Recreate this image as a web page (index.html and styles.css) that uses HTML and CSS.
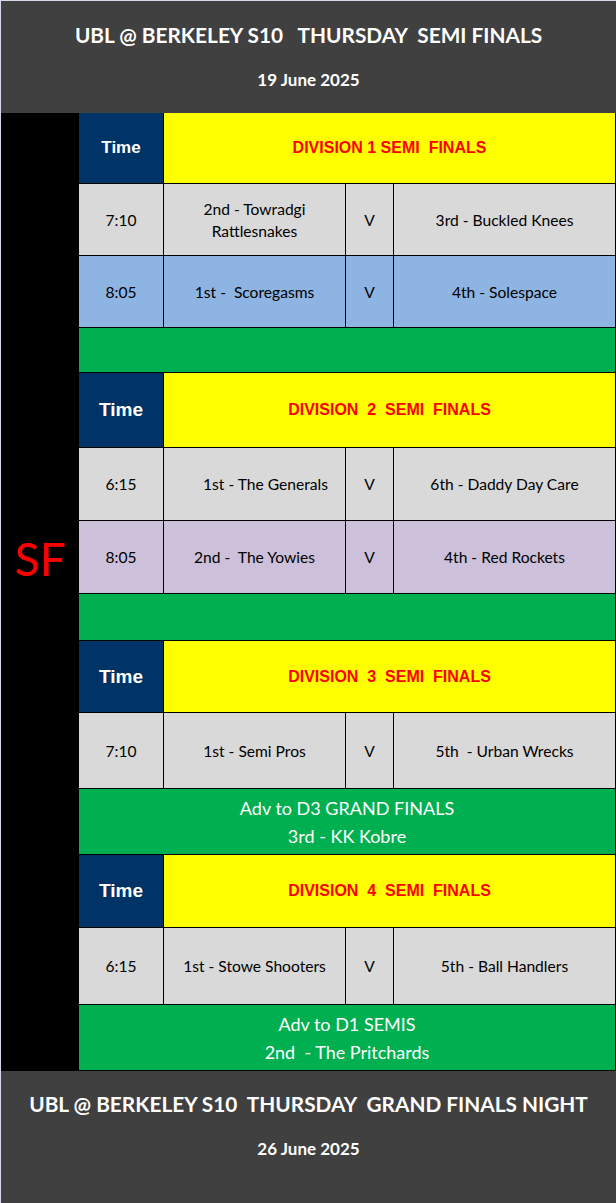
FILE: index.html
```html
<!DOCTYPE html>
<html lang="en">
<head>
<meta charset="utf-8">
<title>UBL @ Berkeley S10 Thursday Semi Finals</title>
<link rel="stylesheet" href="styles.css">
</head>
<body>
<div class="page">
  <header class="banner">
    <div class="banner-title">UBL @ BERKELEY S10   THURSDAY  SEMI FINALS</div>
    <div class="banner-date">19 June 2025</div>
  </header>
  <main class="board">
    <div class="sf"><span class="sf-text">SF</span></div>
    <div class="grid">
      <div class="c time-h small">Time</div>
      <div class="c div-h">DIVISION 1 SEMI  FINALS</div>
      <div class="c gray">7:10</div>
      <div class="c gray two">2nd - Towradgi<br>Rattlesnakes</div>
      <div class="c gray">V</div>
      <div class="c gray">3rd - Buckled Knees</div>
      <div class="c blue">8:05</div>
      <div class="c blue">1st -  Scoregasms</div>
      <div class="c blue">V</div>
      <div class="c blue">4th - Solespace</div>
      <div class="c green"></div>

      <div class="c time-h">Time</div>
      <div class="c div-h">DIVISION  2  SEMI  FINALS</div>
      <div class="c gray">6:15</div>
      <div class="c gray shifted">1st - The Generals</div>
      <div class="c gray">V</div>
      <div class="c gray">6th - Daddy Day Care</div>
      <div class="c lilac">8:05</div>
      <div class="c lilac">2nd -  The Yowies</div>
      <div class="c lilac">V</div>
      <div class="c lilac">4th - Red Rockets</div>
      <div class="c green"></div>

      <div class="c time-h">Time</div>
      <div class="c div-h">DIVISION  3  SEMI  FINALS</div>
      <div class="c gray">7:10</div>
      <div class="c gray">1st - Semi Pros</div>
      <div class="c gray">V</div>
      <div class="c gray">5th  - Urban Wrecks</div>
      <div class="c green note">Adv to D3 GRAND FINALS<br>3rd - KK Kobre</div>

      <div class="c time-h">Time</div>
      <div class="c div-h">DIVISION  4  SEMI  FINALS</div>
      <div class="c gray">6:15</div>
      <div class="c gray">1st - Stowe Shooters</div>
      <div class="c gray">V</div>
      <div class="c gray">5th - Ball Handlers</div>
      <div class="c green note">Adv to D1 SEMIS<br>2nd  - The Pritchards</div>
    </div>
  </main>
  <footer class="banner bottom">
    <div class="banner-title">UBL @ BERKELEY S10  THURSDAY  GRAND FINALS NIGHT</div>
    <div class="banner-date">26 June 2025</div>
  </footer>
</div>
</body>
</html>
```

FILE: styles.css
```css
html, body {
  margin: 0;
  padding: 0;
  background: #404040;
}

.page {
  width: 615px;
  height: 1202px;
  border-top: 1px solid #d3d9e6;
  border-left: 1px solid #d3d9e6;
  background: #404040;
  display: flex;
  flex-direction: column;
  overflow: hidden;
}

.banner {
  height: 112px;
  flex: none;
  box-sizing: border-box;
  padding-top: 22px;
  background: #404040;
  color: #ffffff;
  font-family: Lato, "Noto Sans", sans-serif;
  font-weight: 700;
  text-align: center;
}

.banner.bottom {
  height: 132px;
  padding-top: 21px;
}

.banner-title {
  font-size: 20.8px;
  line-height: 24px;
  white-space: pre;
}

.banner-date {
  font-size: 17px;
  line-height: 20px;
  margin-top: 23px;
  white-space: pre;
}

.board {
  display: flex;
  flex: none;
  background: #000;
}

.sf {
  width: 78px;
  flex: none;
  display: flex;
  align-items: center;
  justify-content: center;
  padding-bottom: 67px;
  box-sizing: border-box;
  background: #000;
}

.sf-text {
  font-family: Lato, "Noto Sans", sans-serif;
  font-size: 46px;
  line-height: 46px;
  color: #ff0000;
}

.grid {
  display: grid;
  grid-template-columns: 84px 181px 47px 221px;
  grid-template-rows: 70px 71px 71px 44px 74px 72px 72px 46px 71px 75px 65px 72px 76px 65px;
  gap: 1px;
  padding: 0 1px 1px 0;
  background: #000;
}

.c {
  display: flex;
  align-items: center;
  justify-content: center;
  text-align: center;
  white-space: pre;
  font-family: Lato, "Noto Sans", sans-serif;
  font-size: 15.6px;
  line-height: 22px;
  color: #000;
}

.time-h {
  background: #003366;
  color: #fff;
  font-family: "Liberation Sans", Arial, sans-serif;
  font-weight: 700;
  font-size: 19px;
}

.time-h.small {
  font-size: 17px;
}

.div-h {
  grid-column: span 3;
  background: #ffff00;
  color: #ff0000;
  font-family: "Liberation Sans", Arial, sans-serif;
  font-weight: 700;
  font-size: 16px;
}

.gray { background: #d9d9d9; }
.blue { background: #8eb4e3; }
.lilac { background: #ccc0da; }

.shifted { padding-left: 22px; }

.green {
  grid-column: span 4;
  background: #00b050;
}

.note {
  color: #fff;
  font-size: 18px;
  line-height: 28px;
}
```
